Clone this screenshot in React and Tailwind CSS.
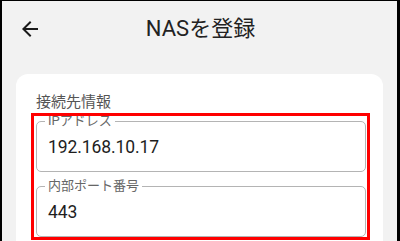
import React from "react";

function Field({ label, value }) {
  return (
    <div className="relative h-[51px] rounded-[5px] border border-[#b4b4b4] flex items-center pl-[11px]">
      <span className="absolute left-[8px] -top-[10px] bg-white px-[3px] text-[13px] leading-[18px] text-[#666]">
        {label}
      </span>
      <span className="text-[17.5px] text-[#1e1e1e] tracking-[-0.1px] pt-[1px]">{value}</span>
    </div>
  );
}

export default function App() {
  return (
    <div
      className="w-[400px] h-[241px] overflow-hidden bg-[#f2f2f2] border-t border-l-2 border-r-[3px] border-black flex flex-col"
      style={{ fontFamily: "Roboto, 'Noto Sans CJK JP', sans-serif" }}
    >
      <div className="relative h-[56px] shrink-0 flex items-center justify-center">
        <svg
          className="absolute left-[16px] top-[16px]"
          width="24"
          height="24"
          viewBox="0 0 24 24"
          fill="#1a1a1a"
        >
          <path d="M20 11H7.83l5.59-5.59L12 4l-8 8 8 8 1.41-1.41L7.83 13H20v-2z" />
        </svg>
        <span className="text-[22px] text-[#222] leading-none pl-[2px]">NASを登録</span>
      </div>
      <div className="mt-[17px] ml-[14px] mr-[14px] bg-white rounded-[12px] pl-[20px] pr-[17px] pt-[17px] pb-6 flex-1">
        <div className="text-[15px] leading-[22px] text-[#555]">接続先情報</div>
        <div className="relative mt-[8px] flex flex-col gap-[14px]">
          <Field label="IPアドレス" value="192.168.10.17" />
          <Field label="内部ポート番号" value="443" />
          <div className="absolute -top-[8px] -left-[5px] -right-[4px] -bottom-[3px] border-[3px] border-[#ff0000] pointer-events-none" />
        </div>
      </div>
    </div>
  );
}
